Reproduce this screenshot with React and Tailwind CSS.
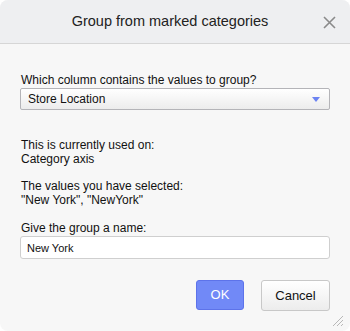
import { useState } from "react";

export default function App() {
  const [name, setName] = useState("New York");

  return (
    <div className="w-[350px] h-[331px] bg-white font-['Liberation_Sans',Arial,sans-serif] text-[#111]">
      <div className="relative flex flex-col w-full h-full rounded-[8px] overflow-hidden bg-[#f7f7f7]">
        {/* header */}
        <div className="relative h-[44px] flex items-center justify-center bg-[#eeeff1] border-b border-[#d6d6d6]">
          <span className="text-[14.5px] text-[#222] -ml-[10px]">Group from marked categories</span>
          <button className="absolute right-[14px] top-[15px] w-[14px] h-[14px] flex items-center justify-center">
            <svg width="13" height="13" viewBox="0 0 13 13" stroke="#8a8a8a" strokeWidth="1.6">
              <path d="M1 1 L12 12 M12 1 L1 12" />
            </svg>
          </button>
        </div>

        {/* body */}
        <div className="flex flex-col px-[20px] pt-[29px] text-[12px] leading-[14px]">
          <label className="pl-[1px]">Which column contains the values to group?</label>
          <div className="mt-[1px] h-[22px] flex items-center justify-between pl-[7px] pr-[9px] rounded-[2px] border border-[#b4b4b8] bg-gradient-to-b from-white to-[#ececec]">
            <span>Store Location</span>
            <svg width="8" height="5" viewBox="0 0 8 5">
              <path d="M0 0 H8 L4 5 Z" fill="#6c83f2" />
            </svg>
          </div>

          <div className="mt-[28px] pl-[1px]">
            <p>This is currently used on:</p>
            <p>Category axis</p>
          </div>

          <div className="mt-[13px] pl-[1px]">
            <p>The values you have selected:</p>
            <p>"New York", "NewYork"</p>
          </div>

          <label className="mt-[14px] pl-[1px]">Give the group a name:</label>
          <input
            value={name}
            onChange={(e) => setName(e.target.value)}
            className="mt-[1px] h-[23px] px-[6px] text-[11px] rounded-[3px] border border-[#cfcfcf] bg-white outline-none"
          />

          <div className="mt-[21px] flex justify-end gap-[17px]">
            <button className="w-[48px] h-[30px] rounded-[3px] border border-[#5d73ea] bg-[#7189f7] text-white text-[13px]">
              OK
            </button>
            <button className="w-[69px] h-[31px] rounded-[3px] border border-[#c8c8c8] bg-gradient-to-b from-white to-[#ececec] text-[13px] text-[#111]">
              Cancel
            </button>
          </div>
        </div>

        {/* resize grip */}
        <svg className="absolute right-[6px] bottom-[4px]" width="12" height="12" viewBox="0 0 12 12" stroke="#b8b8b8" strokeWidth="1">
          <path d="M1 11 L11 1 M5 11 L11 5 M9 11 L11 9" />
        </svg>
      </div>
    </div>
  );
}
